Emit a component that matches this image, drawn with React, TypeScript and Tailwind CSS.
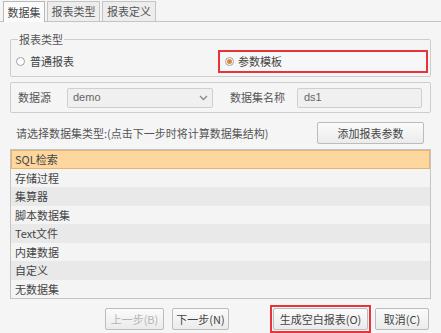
import React from 'react';

const rows = ['SQL检索', '存储过程', '集算器', '脚本数据集', 'Text文件', '内建数据', '自定义', '无数据集'];

const Radio = ({ checked }: { checked?: boolean }) => (
    <span className="w-[9px] h-[9px] rounded-full border border-[#a0a0a0] bg-white flex items-center justify-center shrink-0">
        {checked && <span className="w-[5px] h-[5px] rounded-full bg-[#e0883a]" />}
    </span>
);

const Btn = ({ label, disabled, className }: { label: string; disabled?: boolean; className?: string }) => (
    <button
        className={`h-[22px] border border-[#bcbcbc] rounded-[2px] bg-gradient-to-b from-[#fbfbfb] to-[#ebebeb] text-[11px] leading-none whitespace-nowrap ${disabled ? 'text-[#b4b4b4]' : 'text-[#444]'} ${className ?? ''}`}
    >
        {label}
    </button>
);

export default function App() {
    return (
        <div className="w-[441px] h-[333px] overflow-hidden bg-[#f5f5f5] text-[11px] text-[#444] font-['Noto_Sans_CJK_SC','Noto_Sans',sans-serif] flex flex-col whitespace-nowrap">
            {/* tabs */}
            <div className="h-[23px] flex items-end pl-[3px] gap-[2px] border-b border-[#c4c4c4]">
                <div className="h-[21px] w-[42px] flex items-center justify-center border border-b-0 border-[#b8b8b8] bg-[#fbfbfb] -mb-px">数据集</div>
                <div className="h-[20px] w-[53px] flex items-center justify-center border border-b-0 border-[#c4c4c4] bg-[#ededed] text-[#555]">报表类型</div>
                <div className="h-[20px] w-[54px] flex items-center justify-center border border-b-0 border-[#c4c4c4] bg-[#ededed] text-[#555]">报表定义</div>
            </div>

            <div className="px-[10px] flex flex-col">
                {/* report type group */}
                <fieldset className="mt-[9px] h-[46px] border border-[#cdcdcd] rounded-[2px] pl-[5px] pr-[2px]">
                    <legend className="ml-[2px] px-[1px] leading-[16px] text-[#555]">报表类型</legend>
                    <div className="flex items-center h-[24px] mt-[2px]">
                        <div className="flex items-center gap-[5px] w-[202px]">
                            <Radio />
                            <span>普通报表</span>
                        </div>
                        <div className="flex-1 h-[23px] border-2 border-[#e5343a] flex items-center pl-[5px] gap-[4px] bg-[#f7f7f7]">
                            <Radio checked />
                            <span>参数模板</span>
                        </div>
                    </div>
                </fieldset>

                {/* datasource row */}
                <div className="mt-[5px] h-[31px] border border-[#cdcdcd] rounded-[2px] flex items-center pl-[7px] pr-[8px]">
                    <span className="w-[49px] text-[#555]">数据源</span>
                    <div className="w-[146px] h-[20px] border border-[#cfcfcf] rounded-[2px] bg-[#f0f0f0] flex items-center justify-between pl-[5px] pr-[4px]">
                        <span className="font-['Liberation_Sans',sans-serif] text-[#666]">demo</span>
                        <svg width="9" height="6" viewBox="0 0 9 6">
                            <path d="M1 1 L4.5 4.5 L8 1" stroke="#888" strokeWidth="1.3" fill="none" />
                        </svg>
                    </div>
                    <span className="ml-[17px] text-[#555]">数据集名称</span>
                    <div className="ml-auto w-[125px] h-[20px] border border-[#cfcfcf] rounded-[2px] bg-[#f0f0f0] flex items-center pl-[6px]">
                        <span className="font-['Liberation_Sans',sans-serif] text-[#666]">ds1</span>
                    </div>
                </div>

                {/* prompt + add params */}
                <div className="mt-[9px] h-[22px] flex items-center">
                    <span className="pl-[6px] text-[#555]">请选择数据集类型:(点击下一步时将计算数据集结构)</span>
                    <Btn label="添加报表参数" className="ml-auto mr-[7px] w-[107px] h-[20px]" />
                </div>

                {/* list */}
                <div className="mt-[5px] h-[150px] border border-[#c4c4c4] grid grid-rows-8 bg-[#f5f5f5]">
                    {rows.map((r, i) => (
                        <div
                            key={r}
                            className={
                                i === 0
                                    ? 'flex items-center pl-[3px] bg-[#fdd79e] border border-[#e6b46e]'
                                    : i % 2 === 0
                                      ? 'flex items-center pl-[4px] bg-[#e9e9e9]'
                                      : 'flex items-center pl-[4px] bg-[#f4f4f4]'
                            }
                        >
                            {r}
                        </div>
                    ))}
                </div>

                {/* bottom buttons */}
                <div className="mt-[6px] flex items-center">
                    <Btn label="上一步(B)" disabled className="ml-[95px] w-[59px]" />
                    <Btn label="下一步(N)" className="ml-[8px] w-[57px]" />
                    <div className="ml-[41px] border-2 border-[#e5343a] p-[1px]">
                        <Btn label="生成空白报表(O)" className="w-[95px]" />
                    </div>
                    <Btn label="取消(C)" className="ml-[4px] w-[54px]" />
                </div>
            </div>
        </div>
    );
}
